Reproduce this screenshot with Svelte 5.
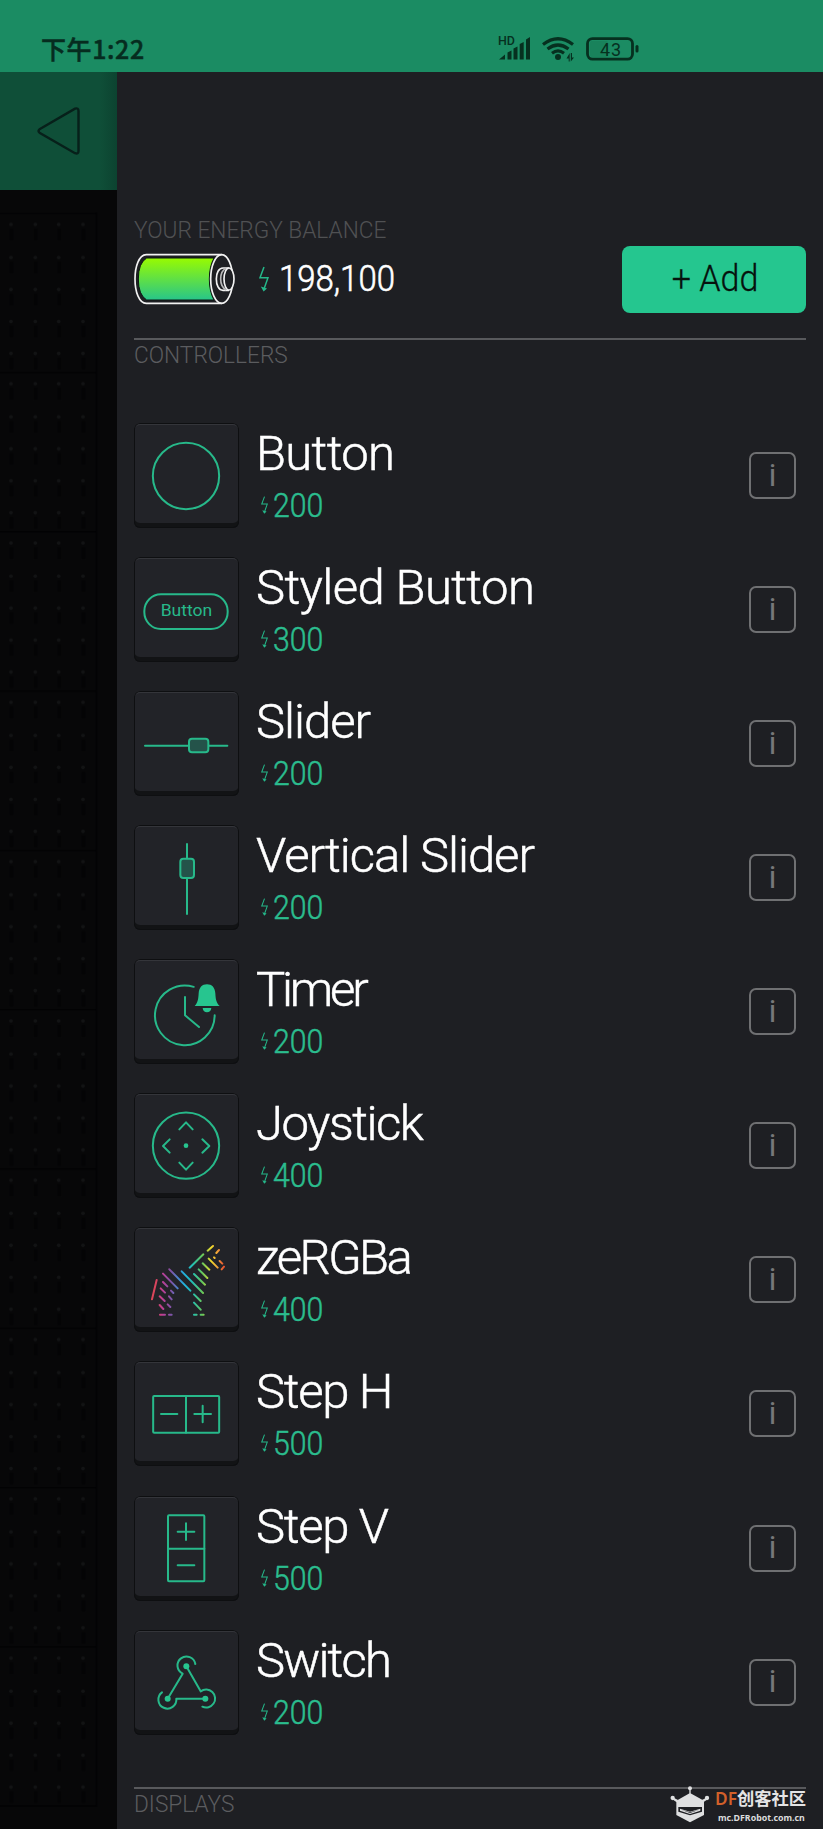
<script lang="ts">
    interface Widget {
        kind: string;
        name: string;
        price: number;
        tracking: number;
    }

    const widgets: Widget[] = [
        { kind: 'button', name: 'Button', price: 200, tracking: -0.7 },
        { kind: 'styled', name: 'Styled Button', price: 300, tracking: -0.6 },
        { kind: 'slider', name: 'Slider', price: 200, tracking: -1 },
        { kind: 'vslider', name: 'Vertical Slider', price: 200, tracking: -1.05 },
        { kind: 'timer', name: 'Timer', price: 200, tracking: -3.2 },
        { kind: 'joystick', name: 'Joystick', price: 400, tracking: -1.5 },
        { kind: 'zergba', name: 'zeRGBa', price: 400, tracking: -2.6 },
        { kind: 'steph', name: 'Step H', price: 500, tracking: -1.3 },
        { kind: 'stepv', name: 'Step V', price: 500, tracking: -1.3 },
        { kind: 'switch', name: 'Switch', price: 200, tracking: -1.8 }
    ];

    const dotX = [11, 35.3, 58.7, 83];
    const dotY = [12, 45, 77, 109, 141];
</script>

<div class="screen">
    <header class="status">
        <span class="time">下午1:22</span>
        <svg class="status-icons" width="145" height="30" viewBox="0 0 145 30">
            <g fill="#06301f">
                <text x="0" y="13" font-size="12.5" font-weight="500" textLength="17">HD</text>
                <path d="M1 27.500l6-5v5z M9.500 20.500l4-2v9h-4z M15.500 16.500l4-2v13h-4z M21.700 12l4-2v17.500h-4z M28 7.500l4-2.500v22.500h-4z" />
                <circle cx="60" cy="25" r="3" />
                <path d="M68.500 26.500h2.200v3h1v-8.500zM72.800 21v8.500l3.200-4h-2v-4.500z" />
                <rect x="137.500" y="13" width="3" height="7.500" rx="1.500" />
                <text x="102" y="23.500" font-size="18" font-weight="400" textLength="21">43</text>
            </g>
            <g fill="none" stroke="#06301f" stroke-width="3.200">
                <path d="M45 12.500q15-11.500 30 0M49.500 17q10.500-8 21 0M54 21.200q6-4.500 12 0" />
                <rect x="89.500" y="6.600" width="45" height="20.500" rx="5" stroke-width="2.800" />
            </g>
            <rect x="92" y="9" width="18" height="16" rx="2" fill="#06301f" opacity="0.1" />
        </svg>
    </header>

    <div class="body">
        <aside>
            <div class="back">
                <svg width="46" height="52" viewBox="0 0 46 52">
                    <path
                        d="M3.500 24.300L39 3.700Q42.500 2.500 42.500 6V46Q42.500 49.500 39 48.200L3.500 27.700Q1.500 26 3.500 24.300Z"
                        fill="none"
                        stroke="#07201a"
                        stroke-width="2.400"
                    />
                </svg>
            </div>
            <svg class="canvas" width="117" height="1639">
                <defs>
                    <pattern id="cell" x="0" y="22.500" width="117" height="159.300" patternUnits="userSpaceOnUse">
                        <path d="M0 .7H96" stroke="#020203" stroke-width="1.500" />
                        {#each dotY as y}
                            {#each dotX as x}
                                <rect x={x - 1.5} y={y + 4} width="4" height="12" fill="#040405" />
                                <circle cx={x} cy={y} r="1.800" fill="#121314" />
                            {/each}
                        {/each}
                    </pattern>
                </defs>
                <rect y="22.500" width="97" height="1594" fill="url(#cell)" />
                <path d="M96.500 22.500V1616H0" fill="none" stroke="#030304" stroke-width="1.500" />
            </svg>
        </aside>

        <main>
            <h2 class="balance-title"><span>YOUR ENERGY BALANCE</span></h2>
            <div class="balance">
                <svg class="battery" width="102" height="52" viewBox="0 0 306 156">
                    <defs>
                        <linearGradient id="charge" x1="0" y1="0" x2="0" y2="1">
                            <stop offset="0" stop-color="#98fb00" />
                            <stop offset="1" stop-color="#27c58a" />
                        </linearGradient>
                    </defs>
                    <path
                        d="M38 15H240Q226 40 226 78T240 141H38Q13 126 13 78T38 15Z"
                        fill="url(#charge)"
                        stroke="#0c1612"
                        stroke-width="3"
                    />
                    <g fill="none" stroke="#f2f2f2" stroke-width="5">
                        <path d="M263 5H37C15 5 3 40 3 78S15 151 37 151H263" />
                        <ellipse cx="263" cy="78" rx="33" ry="73" />
                        <path d="M285 45H267C254 45 247 60 247 78S254 112 267 112H285" />
                        <path d="M276 46C265 52 260 63 260 78S265 104 276 111" stroke="#b9b9b9" />
                        <ellipse cx="285" cy="78" rx="15" ry="33" fill="#1e1f23" />
                    </g>
                </svg>
                <svg class="bolt" width="10" height="26" viewBox="0 0 10 26">
                    <path d="M5 1L1 11.700H9L5 23" />
                    <path class="tip" d="M1.800 20.500L8 22.500L4.600 25.500Z" />
                </svg>
                <span class="amount">198,100</span>
                <button class="add"><span>+ Add</span></button>
            </div>

            <h2 class="section"><span>CONTROLLERS</span></h2>

            <ul>
                {#each widgets as w}
                    <li>
                        <div class="tile">
                            <svg width="104" height="104" viewBox="0 0 312 312">
                                {#if w.kind === 'button'}
                                    <circle cx="156" cy="156" r="99.500" />
                                {:else if w.kind === 'styled'}
                                    <rect x="31" y="109" width="250" height="104" rx="50" />
                                    <text x="80" y="175" textLength="155" lengthAdjust="spacingAndGlyphs">Button</text>
                                {:else if w.kind === 'slider'}
                                    <path d="M33 161H163M223 161H280" />
                                    <rect class="knob" x="165" y="140" width="58" height="41" rx="9" />
                                {:else if w.kind === 'vslider'}
                                    <path d="M159 54V96M159 157V264" />
                                    <rect class="knob" x="139" y="98" width="41" height="58" rx="9" />
                                {:else if w.kind === 'timer'}
                                    <path d="M179 80.500A89.500 89.500 0 1 0 242 166M153 111V166L195 201" />
                                    <path
                                        class="solid"
                                        d="M182 138C192 128 193 116 194 100C195 83 204 73 219 73S243 83 244 100C245 116 246 128 257 138ZM206 144H232C231 153 226 157 219 157S207 153 206 144Z"
                                    />
                                {:else if w.kind === 'joystick'}
                                    <circle cx="156" cy="155" r="99.500" />
                                    <path d="M136 106L156 85L176 106M107 136L87 156L107 176M205 136L226 156L205 176M136 206L156 227L176 206" />
                                    <circle class="solid" cx="156" cy="155" r="7" />
                                {:else if w.kind === 'zergba'}
                                    <defs>
                                        <linearGradient id="rainbow" gradientUnits="userSpaceOnUse" x1="98" y1="0" x2="314" y2="0">
                                            <stop offset="0" stop-color="#dc4658" />
                                            <stop offset="0.060" stop-color="#d8445f" />
                                            <stop offset="0.150" stop-color="#bb3f96" />
                                            <stop offset="0.270" stop-color="#7e54a8" />
                                            <stop offset="0.360" stop-color="#4a84cc" />
                                            <stop offset="0.450" stop-color="#1fb2dd" />
                                            <stop offset="0.570" stop-color="#25bfae" />
                                            <stop offset="0.700" stop-color="#68c85a" />
                                            <stop offset="0.760" stop-color="#a5cf45" />
                                            <stop offset="0.820" stop-color="#f2dd2c" />
                                            <stop offset="0.910" stop-color="#f0a03a" />
                                            <stop offset="1" stop-color="#e8502f" />
                                        </linearGradient>
                                    </defs>
                                    <g transform="translate(-44 -40)">
                                        <path
                                            stroke="url(#rainbow)"
                                            d="M112 196L98 254M131 177L175 221M150 164L213 228M187 170L251 235M224 178L257 210M238 164L264 190M250 146L270 165M268 132L295 159
                                            M211 159L252 119M265 108L281 94M291 115L299 106M284 128L286 130M301 139L309 147M307 164L314 156
                                            M131 202L144 215M124 221L137 234M121 245L136 259M121 271L132 283M155 228L162 235M149 245L157 254M145 269L153 277
                                            M224 239L244 259M224 264L244 285M122 300L137 300.100M149 300L157 300.100M224 300L232 300.100M244 300L253 300.100"
                                        />
                                    </g>
                                {:else if w.kind === 'steph'}
                                    <rect x="57.500" y="102" width="198" height="110" rx="3" />
                                    <path d="M156 102V212M81 156H130M181 156H231M206 131V181" />
                                {:else if w.kind === 'stepv'}
                                    <rect x="102" y="58" width="109" height="198" rx="3" />
                                    <path d="M102 158H211M131 107H181M156 82V132M131 208H181" />
                                {:else}
                                    <path d="M184 102A27 27 0 1 0 146 131L101 206M157 109L200 184A27 27 0 1 1 205 230M84 187A27 27 0 1 0 127 206H214" />
                                    <circle class="solid" cx="157" cy="109" r="9" />
                                    <circle class="solid" cx="101" cy="206" r="9" />
                                    <circle class="solid" cx="214" cy="206" r="9" />
                                {/if}
                            </svg>
                        </div>
                        <div class="label">
                            <span class="name" style="letter-spacing: {w.tracking}px">{w.name}</span>
                            <span class="price">
                                <svg class="bolt" width="7" height="18" viewBox="0 0 10 26">
                                    <path d="M5 1L1 11.700H9L5 23" />
                                    <path class="tip" d="M1.800 20.500L8 22.500L4.600 25.500Z" />
                                </svg>
                                <b>{w.price}</b>
                            </span>
                        </div>
                        <button class="info">i</button>
                    </li>
                {/each}
            </ul>

            <h2 class="section"><span>DISPLAYS</span></h2>
        </main>
    </div>

    <div class="mark">
        <svg width="40" height="38" viewBox="0 0 120 114">
            <g fill="#dfe0e1">
                <path d="M60 21L102 44V87L60 109L19 87V44Z" />
                <circle cx="60" cy="7" r="6" />
                <circle cx="8" cy="36" r="6.500" />
                <circle cx="111" cy="36" r="6.500" />
                <path d="M58 8h4v15h-4zM8 34L24 42L20 49L6 39zM112 34L96 42L100 49L114 39z" />
            </g>
            <path d="M25 63H96V77L60 88L25 77Z" fill="#1e1f23" />
            <path d="M30 68L60 77L91 68V74L60 84L30 74Z" fill="#dfe0e1" />
            <path d="M34 71L60 79L87 71L60 81Z" fill="#1e1f23" />
        </svg>
        <div class="mark-text">
            <span class="mark-name"><em>DF</em>创客社区</span>
            <span class="mark-url">mc.DFRobot.com.cn</span>
        </div>
    </div>
</div>

<style>
    :global(body) {
        background: #1e1f23;
    }
    .screen {
        position: relative;
        width: 823px;
        height: 1829px;
        overflow: hidden;
        background: #1e1f23;
        font-family: Roboto, 'Noto Sans CJK SC', sans-serif;
        font-weight: 300;
    }
    .status {
        display: flex;
        align-items: flex-start;
        box-sizing: border-box;
        height: 72px;
        padding: 32px 0 0 41px;
        background: #1b8c63;
        color: #062c1f;
    }
    .time {
        width: 457px;
        font: 500 25px/32px 'Noto Sans CJK SC', sans-serif;
        letter-spacing: 0.6px;
        -webkit-text-stroke: 0.5px;
    }
    .body {
        display: flex;
        height: 1757px;
    }
    aside {
        width: 117px;
        flex: none;
        background: #070708;
    }
    .back {
        display: flex;
        align-items: center;
        box-sizing: border-box;
        height: 118px;
        padding-left: 36px;
        background: linear-gradient(90deg, #0f4f38 85%, #0c4330);
    }
    .canvas {
        display: block;
    }
    main {
        flex: 1;
        padding: 0 17px;
    }
    h2 {
        margin: 0;
        color: #505153;
        font-size: 24.5px;
        font-weight: 300;
        line-height: 28px;
    }
    h2 span,
    .amount,
    .price b {
        display: inline-block;
        transform-origin: left;
        white-space: nowrap;
    }
    h2 span {
        transform: scaleX(0.925);
    }
    .balance-title {
        padding-top: 144px;
    }
    .balance {
        display: flex;
        align-items: center;
        height: 68px;
        margin-top: 1px;
        margin-bottom: 25px;
    }
    .battery {
        flex: none;
    }
    .bolt {
        flex: none;
        fill: none;
        stroke: #25b88a;
        stroke-width: 1.5;
    }
    .tip {
        fill: #25b88a;
        stroke: none;
    }
    .balance .bolt {
        margin: 0 10px 0 23px;
    }
    .amount {
        margin-top: -2px;
        color: #fff;
        font-size: 37px;
        transform: scaleX(0.89);
        -webkit-text-stroke: 0.6px;
    }
    .add {
        width: 184.5px;
        height: 67px;
        margin-left: auto;
        padding: 0 0 2px 2px;
        border: 0;
        border-radius: 8px;
        background: #25c68f;
        color: #06120d;
        font: 300 37px Roboto, sans-serif;
    }
    .add span {
        display: inline-block;
        transform: scaleX(0.92);
        -webkit-text-stroke: 0.3px;
    }
    .section {
        padding-top: 1px;
        border-top: 2px solid #58595c;
        color: #5b5c5f;
    }
    ul {
        height: 1418px;
        margin: 0;
        padding: 54px 0 0;
        box-sizing: border-box;
        list-style: none;
    }
    li {
        display: flex;
        height: 134.07px;
    }
    .tile {
        box-sizing: border-box;
        width: 105px;
        height: 105px;
        padding: 0.5px 0 0 0.3px;
        border-radius: 6px;
        background: #222328;
        box-shadow:
            inset 0 0 0 1px #0e0f11,
            inset 0 2px 0 #34353a,
            inset 0 -5px 0 #121315;
    }
    .tile svg {
        display: block;
        fill: none;
        stroke: #27b98a;
        stroke-width: 6;
        stroke-linecap: round;
        stroke-linejoin: round;
    }
    .tile text {
        fill: #27b98a;
        stroke: none;
        font-size: 51px;
        font-weight: 400;
    }
    .tile .knob {
        fill: #24534a;
    }
    .tile .solid {
        fill: #27c58f;
        stroke: none;
    }
    .label {
        flex: 1;
        padding-left: 17px;
    }
    .name {
        display: block;
        height: 61px;
        color: #fff;
        font-size: 49px;
        line-height: 62px;
        white-space: nowrap;
        -webkit-text-stroke: 0.5px;
    }
    .price {
        display: flex;
        align-items: center;
        height: 42px;
        padding-left: 5px;
        color: #2bbd8e;
        font-size: 34px;
        line-height: 42px;
    }
    .price b {
        margin-left: 5px;
        font-weight: 300;
        transform: scaleX(0.89);
        -webkit-text-stroke: 0.5px;
    }
    .info {
        box-sizing: border-box;
        width: 47px;
        height: 47px;
        margin: 29px 10px 0 0;
        padding: 0;
        border: 2px solid #6f7072;
        border-radius: 7px;
        background: none;
        color: #77787a;
        font: 400 31px/40px Roboto, sans-serif;
    }
    .mark {
        position: absolute;
        top: 1786px;
        left: 670px;
        display: flex;
        gap: 5px;
    }
    .mark-text {
        display: flex;
        flex-direction: column;
    }
    .mark-name {
        height: 26px;
        color: #e4e4e5;
        font: 700 17.3px/26px 'Noto Sans', 'Noto Sans CJK SC', sans-serif;
        white-space: nowrap;
    }
    .mark-name em {
        color: #d2602a;
        font-style: normal;
        font-weight: 600;
    }
    .mark-url {
        padding-left: 3px;
        color: #dcdcdd;
        font: 700 8.8px/12px 'Noto Sans', sans-serif;
    }
</style>
